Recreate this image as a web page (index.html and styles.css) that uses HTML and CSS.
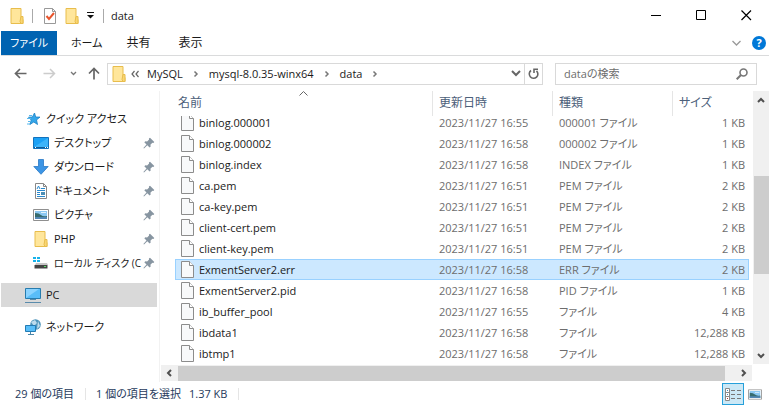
FILE: index.html
```
<!DOCTYPE html>
<html lang="ja">
<head>
<meta charset="utf-8">
<title>data</title>
<link rel="stylesheet" href="styles.css">
</head>
<body>
<svg class="defs" aria-hidden="true">
  <symbol id="folder" viewBox="0 0 14 16"><path d="M1 .5h10v11h2v4H1z" fill="#ffe69b" stroke="#e8bd4c"/><path d="M11 8.500h2v7h-2l-1-2z" fill="#f9d673" stroke="#e8bd4c"/></symbol>
  <symbol id="file" viewBox="0 0 13 17"><path d="M.5.5h8l4 4v12H.5z" fill="#f8f9fa" stroke="#8c8c8c"/><path d="M8.500.5v4h4" fill="#fff" stroke="#8c8c8c"/></symbol>
  <symbol id="pin" viewBox="0 0 12 12"><path d="M7 .8l4.300 4.300-.9.900-1-.3-2 2 .3 1.700-1.100 1.100L4.300 8.300 1 11.400l-.6-.5L3.500 7.500 1.300 5.200l1.100-1 1.700.3 2-2-.2-1z" fill="#8795a1"/></symbol>
  <symbol id="right" viewBox="0 0 6 8"><path d="M1.500 1.500L4 4 1.500 6.500" fill="none" stroke="#777" stroke-width="1.500"/></symbol>
  <symbol id="picture" viewBox="0 0 16 12"><path d="M.5.5h15v11H.5z" fill="#fff" stroke="#8f8f8f"/><path d="M2 2h12v8H2z" fill="#8cc8f2"/><path d="M2 4q4 0 6 2t6 1v3H2z" fill="#376b6d"/><path d="M2 8h12v2H2z" fill="#5387b5"/><path d="M8 3h5v1H8z" fill="#e3f3fc"/></symbol>
</svg>
<div class="window">
  <header class="titlebar">
    <svg class="folder"><use href="#folder"/></svg>
    <i class="sep"></i>
    <button class="quick" aria-label="プロパティ"><svg width="12" height="16" viewBox="0 0 12 16"><path d="M.5.5h8l3 3v12H.5z" fill="#fff" stroke="#999"/><path d="M8.500.5v3h3" fill="none" stroke="#999"/><path d="M2.500 8l2.500 3 5-6" fill="none" stroke="#e8552d" stroke-width="2"/></svg></button>
    <button class="quick" aria-label="新しいフォルダー"><svg class="folder"><use href="#folder"/></svg></button>
    <button class="more" aria-label="カスタマイズ"><svg width="8" height="7" viewBox="0 0 8 7"><path d="M0 .5h7" stroke="#111"/><path d="M0 3h7L3.500 6.500z" fill="#111"/></svg></button>
    <i class="sep"></i>
    <h1>data</h1>
    <div class="controls">
      <button aria-label="最小化"><svg width="11" height="11"><path d="M0 5.500h10" stroke="#000"/></svg></button>
      <button aria-label="最大化"><svg width="11" height="11"><path d="M.5.5h9v9h-9z" fill="none" stroke="#000"/></svg></button>
      <button aria-label="閉じる"><svg width="11" height="11"><path d="M.5.5l9.500 9.500M10 .5L.5 10" fill="none" stroke="#000" stroke-width="1.200"/></svg></button>
    </div>
  </header>
  <nav class="ribbon">
    <button class="tab active">ファイル</button>
    <button class="tab">ホーム</button>
    <button class="tab">共有</button>
    <button class="tab">表示</button>
    <button class="expand" aria-label="リボンの展開"><svg width="9" height="6" viewBox="0 0 9 6"><path d="M.5 1l4 4 4-4" fill="none" stroke="#999" stroke-width="1.300"/></svg></button>
    <button class="help" aria-label="ヘルプ">?</button>
  </nav>
  <div class="addressbar">
    <button class="nav" aria-label="戻る"><svg width="13" height="11" viewBox="0 0 13 11"><path d="M12.500 5.500h-11M6 1L1.500 5.500 6 10" fill="none" stroke="#666" stroke-width="1.700"/></svg></button>
    <button class="nav" aria-label="進む"><svg width="13" height="11" viewBox="0 0 13 11"><path d="M.5 5.500h11M7 1l4.500 4.500L7 10" fill="none" stroke="#ccc" stroke-width="1.500"/></svg></button>
    <button class="recent" aria-label="履歴"><svg width="7" height="5" viewBox="0 0 7 5"><path d="M1 1l2.500 2.500L6 1" fill="none" stroke="#777" stroke-width="1.300"/></svg></button>
    <button class="up" aria-label="上へ"><svg width="12" height="13" viewBox="0 0 12 13"><path d="M6 12.500v-11M1 6.500l5-5 5 5" fill="none" stroke="#666" stroke-width="1.700"/></svg></button>
    <div class="path">
      <svg class="folder"><use href="#folder"/></svg>
      <svg class="back" viewBox="0 0 9 8"><path d="M3.500 1L1 4l2.500 3M7.500 1L5 4l2.500 3" fill="none" stroke="#666" stroke-width="1.200"/></svg>
      <a href="#">MySQL</a><svg class="crumb"><use href="#right"/></svg>
      <a href="#">mysql-8.0.35-winx64</a><svg class="crumb"><use href="#right"/></svg>
      <a href="#">data</a><svg class="crumb"><use href="#right"/></svg>
      <button class="drop" aria-label="以前の場所"><svg width="10" height="7" viewBox="0 0 10 7"><path d="M1 1l4 4 4-4" fill="none" stroke="#666" stroke-width="2"/></svg></button>
      <button class="refresh" aria-label="更新"><svg width="11" height="12" viewBox="0 0 11 12"><path d="M3 2.500a4.300 4.300 0 1 0 5.500.3" fill="none" stroke="#666" stroke-width="1.600"/><path d="M6 5V1.300h4" fill="none" stroke="#666" stroke-width="1.600"/></svg></button>
    </div>
    <label class="search"><input type="text" placeholder="dataの検索" aria-label="dataの検索"><svg width="12" height="12" viewBox="0 0 12 12"><circle cx="7.500" cy="4.500" r="3.500" fill="none" stroke="#777" stroke-width="1.600"/><path d="M5 7L.7 11.300" stroke="#777" stroke-width="2"/></svg></label>
  </div>
  <div class="main">
    <nav class="sidebar">
      <a class="root" href="#"><svg viewBox="0 0 16 16"><path d="M9.500 2l1.200 4 4.300.1-3.500 2.800 1 4.600L8.800 11l-3.900 2.500 1.300-4.500L3.500 6.200l3.900-.2z" fill="#35a7ea" stroke="#1b7fc4" stroke-width=".8"/><path d="M4 4.500h3M2 7.500h4M3 10.500h3M2 13h3" stroke="#58b9ee"/></svg><span>クイック アクセス</span></a>
      <a href="#"><svg viewBox="0 0 16 16"><path d="M.5 2.500h15v11H.5z" fill="#1ba1f5" stroke="#1272bd"/><path d="M1 12L15 3v9z" fill="#3db4fa"/><path d="M1 12.500h14" stroke="#115b96"/><path d="M2 12.500h1m9 0h1m1 0h1" stroke="#fff"/></svg><span>デスクトップ</span><svg class="pin"><use href="#pin"/></svg></a>
      <a href="#"><svg viewBox="0 0 16 16"><path d="M5.500.5h5v7h4.700L8 15.300.8 7.500h4.700z" fill="#3c95e5" stroke="#2879c5" stroke-width=".8"/></svg><span>ダウンロード</span><svg class="pin"><use href="#pin"/></svg></a>
      <a href="#"><svg viewBox="0 0 16 16"><path d="M2.500.5h8l3 3v12h-11z" fill="#fff" stroke="#888"/><path d="M10.500.5v3h3" fill="none" stroke="#888"/><path d="M4 6l1.500-3L7 6M8 5.500h4M4 7.500h8M4 9.500h3M4 11.500h3M4 13.500h8" fill="none" stroke="#2989ce"/><path d="M8 9h4v3H8z" fill="#4c8eb4"/></svg><span>ドキュメント</span><svg class="pin"><use href="#pin"/></svg></a>
      <a href="#"><svg viewBox="0 0 16 12"><use href="#picture"/></svg><span>ピクチャ</span><svg class="pin"><use href="#pin"/></svg></a>
      <a href="#"><svg><use href="#folder"/></svg><span>PHP</span><svg class="pin"><use href="#pin"/></svg></a>
      <a class="long" href="#"><svg viewBox="0 0 16 16"><path d="M0 2h3v2H0zm4 0h3v2H4zM0 5h3v2H0zm4 0h3v2H4z" fill="#16b2ea"/><path d="M3 8h11l1 2H2z" fill="#c6c6c6"/><path d="M1.500 10h13v3.500h-13z" fill="#444"/><path d="M11 11.500h2" stroke="#54df63"/></svg><span>ローカル ディスク (C</span><svg class="pin"><use href="#pin"/></svg></a>
      <a class="root group selected" href="#"><svg viewBox="0 0 16 16"><path d="M.5 1.500h15v10H.5z" fill="#59bdf8" stroke="#277cae"/><path d="M1 11L14 2H1z" fill="#8ad3ff"/><path d="M5 12.500h6M0 15.500h16" stroke="#5a8bab"/></svg><span>PC</span></a>
      <a class="root group" href="#"><svg viewBox="0 0 16 16"><circle cx="10.500" cy="5.500" r="5.300" fill="#4d94ba"/><path d="M6 3l4-2 2 3-3 3M13 2l2 5-3 3" fill="#bddced"/><path d="M.5 6.500h10v6H.5z" fill="#58bef9" stroke="#237bb3"/><path d="M5.500 13v2M3 15.500h6" stroke="#4b86aa"/></svg><span>ネットワーク</span></a>
    </nav>
    <section class="pane">
      <div class="view">
        <table class="files">
          <thead><tr><th>名前<svg class="sort" viewBox="0 0 9 5"><path d="M.5 4.500l4-4 4 4" fill="none" stroke="#666"/></svg></th><th>更新日時</th><th>種類</th><th>サイズ</th></tr></thead>
          <tbody>
            <tr><td><svg><use href="#file"/></svg>binlog.000001</td><td>2023/11/27 16:55</td><td>000001 ファイル</td><td>1 KB</td></tr>
            <tr><td><svg><use href="#file"/></svg>binlog.000002</td><td>2023/11/27 16:58</td><td>000002 ファイル</td><td>1 KB</td></tr>
            <tr><td><svg><use href="#file"/></svg>binlog.index</td><td>2023/11/27 16:58</td><td>INDEX ファイル</td><td>1 KB</td></tr>
            <tr><td><svg><use href="#file"/></svg>ca.pem</td><td>2023/11/27 16:51</td><td>PEM ファイル</td><td>2 KB</td></tr>
            <tr><td><svg><use href="#file"/></svg>ca-key.pem</td><td>2023/11/27 16:51</td><td>PEM ファイル</td><td>2 KB</td></tr>
            <tr><td><svg><use href="#file"/></svg>client-cert.pem</td><td>2023/11/27 16:51</td><td>PEM ファイル</td><td>2 KB</td></tr>
            <tr><td><svg><use href="#file"/></svg>client-key.pem</td><td>2023/11/27 16:51</td><td>PEM ファイル</td><td>2 KB</td></tr>
            <tr class="selected"><td><svg><use href="#file"/></svg>ExmentServer2.err</td><td>2023/11/27 16:58</td><td>ERR ファイル</td><td>2 KB</td></tr>
            <tr><td><svg><use href="#file"/></svg>ExmentServer2.pid</td><td>2023/11/27 16:58</td><td>PID ファイル</td><td>1 KB</td></tr>
            <tr><td><svg><use href="#file"/></svg>ib_buffer_pool</td><td>2023/11/27 16:55</td><td>ファイル</td><td>4 KB</td></tr>
            <tr><td><svg><use href="#file"/></svg>ibdata1</td><td>2023/11/27 16:58</td><td>ファイル</td><td>12,288 KB</td></tr>
            <tr><td><svg><use href="#file"/></svg>ibtmp1</td><td>2023/11/27 16:58</td><td>ファイル</td><td>12,288 KB</td></tr>
          </tbody>
        </table>
        <div class="vscroll">
          <svg viewBox="0 0 8 6"><path d="M1 5l3-3 3 3" fill="none" stroke="#505050" stroke-width="2"/></svg>
          <i></i>
          <svg viewBox="0 0 8 6"><path d="M1 1l3 3 3-3" fill="none" stroke="#505050" stroke-width="2"/></svg>
        </div>
      </div>
      <div class="hscroll">
        <svg viewBox="0 0 6 8"><path d="M5 1L2 4l3 3" fill="none" stroke="#505050" stroke-width="2"/></svg>
        <i></i>
        <svg viewBox="0 0 6 8"><path d="M1 1l3 3-3 3" fill="none" stroke="#505050" stroke-width="2"/></svg>
      </div>
    </section>
  </div>
  <footer class="status">
    <span>29 個の項目</span><i class="rule"></i><span>1 個の項目を選択</span><span class="bytes">1.37 KB</span><i class="rule"></i>
    <div class="modes">
      <button class="on" aria-label="詳細"><svg width="16" height="13" viewBox="0 0 16 13"><path d="M.5.5h4v12h-4zM.5 4.500h4M.5 8.500h4" fill="#fff" stroke="#888"/><path d="M6 2.500h4m2 0h4M6 6.500h4m2 0h4M6 10.500h4m2 0h4" stroke="#777"/><path d="M2 2h1v1H2zm0 4h1v1H2z" fill="#3b89b8"/><path d="M2 10h1v1H2z" fill="#a33"/></svg></button>
      <button aria-label="大アイコン"><svg width="14" height="11" viewBox="0 0 16 12"><use href="#picture"/></svg></button>
    </div>
  </footer>
</div>
</body>
</html>
```
FILE: styles.css
```
* { box-sizing: border-box; }

body {
  margin: 0;
  background: #fff;
  color: #1a1a1a;
  font: 11px/16px "Open Sans", "Noto Sans CJK JP", sans-serif;
  font-feature-settings: "palt";
}

button, input {
  padding: 0;
  border: 0;
  background: none;
  color: inherit;
  font: inherit;
  font-feature-settings: inherit;
}

button { display: flex; align-items: center; justify-content: center; }
a { color: inherit; text-decoration: none; }
svg { flex: none; }
.defs { position: absolute; width: 0; height: 0; }
.folder { width: 14px; height: 16px; }

.window { display: flex; flex-direction: column; min-height: 100vh; padding: 0 1px; }

.titlebar { display: flex; align-items: center; height: 31px; padding-left: 9px; }
.sep { width: 1px; height: 14px; margin: 0 11px 0 8px; background: #aaa; }
.quick { margin-right: 9px; }
.more { margin: 0 8px 0 -1px; }
.more + .sep { margin: 0 7px 0 0; }
h1 { margin: 0; font-size: 11px; font-weight: 400; }
.controls { display: flex; margin-left: auto; }
.controls button { width: 45px; height: 30px; }

.ribbon { display: flex; align-items: center; height: 25px; border-bottom: 1px solid #dadbdc; }
.tab { height: 24px; padding: 0 14px; font-size: 12px; }
.tab.active { width: 56px; padding: 0; background: #0063b1; color: #fff; font-size: 11px; }
.tab.active + .tab { padding-right: 10px; font-size: 11px; }
.expand { margin: 0 11px 0 auto; }
.help {
  width: 14px;
  height: 14px;
  margin-right: 3px;
  border-radius: 50%;
  background: #0078d7;
  color: #fff;
  font-weight: 700;
}

.addressbar { display: flex; align-items: center; height: 35px; padding: 0 12px 0 13px; }
.nav { margin-right: 16px; }
.nav + .recent { margin: 0 11px 0 -2px; }
.up { margin-right: 7px; }
.path {
  display: flex;
  flex: 1;
  align-items: center;
  height: 22px;
  margin-right: 12px;
  padding-left: 4px;
  border: 1px solid #d9d9d9;
}
.back { width: 9px; height: 8px; margin: 0 7px 0 5px; }
.crumb { width: 6px; height: 8px; margin: 0 10px; }
.drop { width: 17px; height: 20px; margin-left: auto; }
.refresh { width: 18px; height: 20px; border-left: 1px solid #d9d9d9; }
.search {
  display: flex;
  flex: 0 1 202px;
  align-items: center;
  height: 22px;
  padding: 0 8px;
  border: 1px solid #d9d9d9;
}
.search input { flex: 1; min-width: 0; outline: 0; }
.search input::placeholder { color: #6d6d6d; opacity: 1; }

.main { display: flex; flex: 1; }
.sidebar { width: 159px; padding: 16px 2px 0 0; border-right: 1px solid #f2f2f2; }
.sidebar a {
  display: flex;
  align-items: center;
  gap: 5px;
  height: 24px;
  padding: 0 2px 0 32px;
  white-space: nowrap;
}
.sidebar .root { padding-left: 24px; }
.sidebar .long { font-size: 10px; }
.sidebar svg { width: 16px; height: 16px; }
.sidebar span { flex: 1; min-width: 0; }
.sidebar .pin { width: 12px; height: 12px; margin-left: -5px; }
.sidebar .group { margin-top: 8px; }
.sidebar .selected { background: #d9d9d9; }

.pane { flex: 1; min-width: 0; }
.view { display: flex; }

.files { display: block; flex: 1; min-width: 0; padding: 0 4px 0 15px; }
.files thead { display: block; height: 21px; }
.files tbody { display: block; }
.files tr { display: grid; grid-template-columns: 1fr 120px 120px 77px; }
.files thead tr { position: relative; z-index: 1; height: 25px; background: #fff; }
.files th {
  padding: 4px 6px;
  border-left: 1px solid #e5e5e5;
  color: #4c607a;
  font-size: 12px;
  font-weight: 400;
  text-align: left;
}
.files th:first-child { position: relative; padding-left: 2px; border-color: transparent; }
.sort { position: absolute; top: 0; left: 48%; width: 9px; height: 5px; }
.files tbody tr { height: 21px; }
.files td {
  display: flex;
  align-items: center;
  padding: 0 7px;
  color: #6d6d6d;
  white-space: nowrap;
}
.files td:first-child { gap: 5px; padding-left: 6px; color: #1a1a1a; }
.files td:last-child { justify-content: flex-end; padding-right: 4px; }
.files td svg { width: 13px; height: 17px; }
.files .selected { background: #cce8ff; box-shadow: inset 0 0 0 1px #99d1ff; }

.vscroll {
  display: flex;
  flex-direction: column;
  align-items: center;
  width: 16px;
  padding: 6px 0 5px;
  background: #f0f0f0;
}
.vscroll svg { width: 8px; height: 6px; }
.vscroll i { width: 15px; height: 98px; margin: 73px 0 auto; background: #cdcdcd; }

.hscroll {
  display: flex;
  align-items: center;
  height: 16px;
  margin: 1px 17px 0 1px;
  padding: 0 5px;
  background: #f0f0f0;
}
.hscroll svg { width: 6px; height: 8px; }
.hscroll i { flex: 1; height: 15px; margin: 0 16px 0 6px; background: #cdcdcd; }

.status {
  display: flex;
  align-items: center;
  height: 24px;
  padding-left: 14px;
  color: #1e395b;
}
.rule { width: 1px; height: 12px; margin: 0 10px 0 11px; background: #e5e5e5; }
.bytes { margin-left: 8px; }
.modes { display: flex; align-items: center; margin-left: auto; }
.modes button { width: 22px; height: 22px; }
.modes button + button { margin-right: 3px; }
.modes .on { border: 1px solid #26a0da; background: #cbe8f6; }
```
